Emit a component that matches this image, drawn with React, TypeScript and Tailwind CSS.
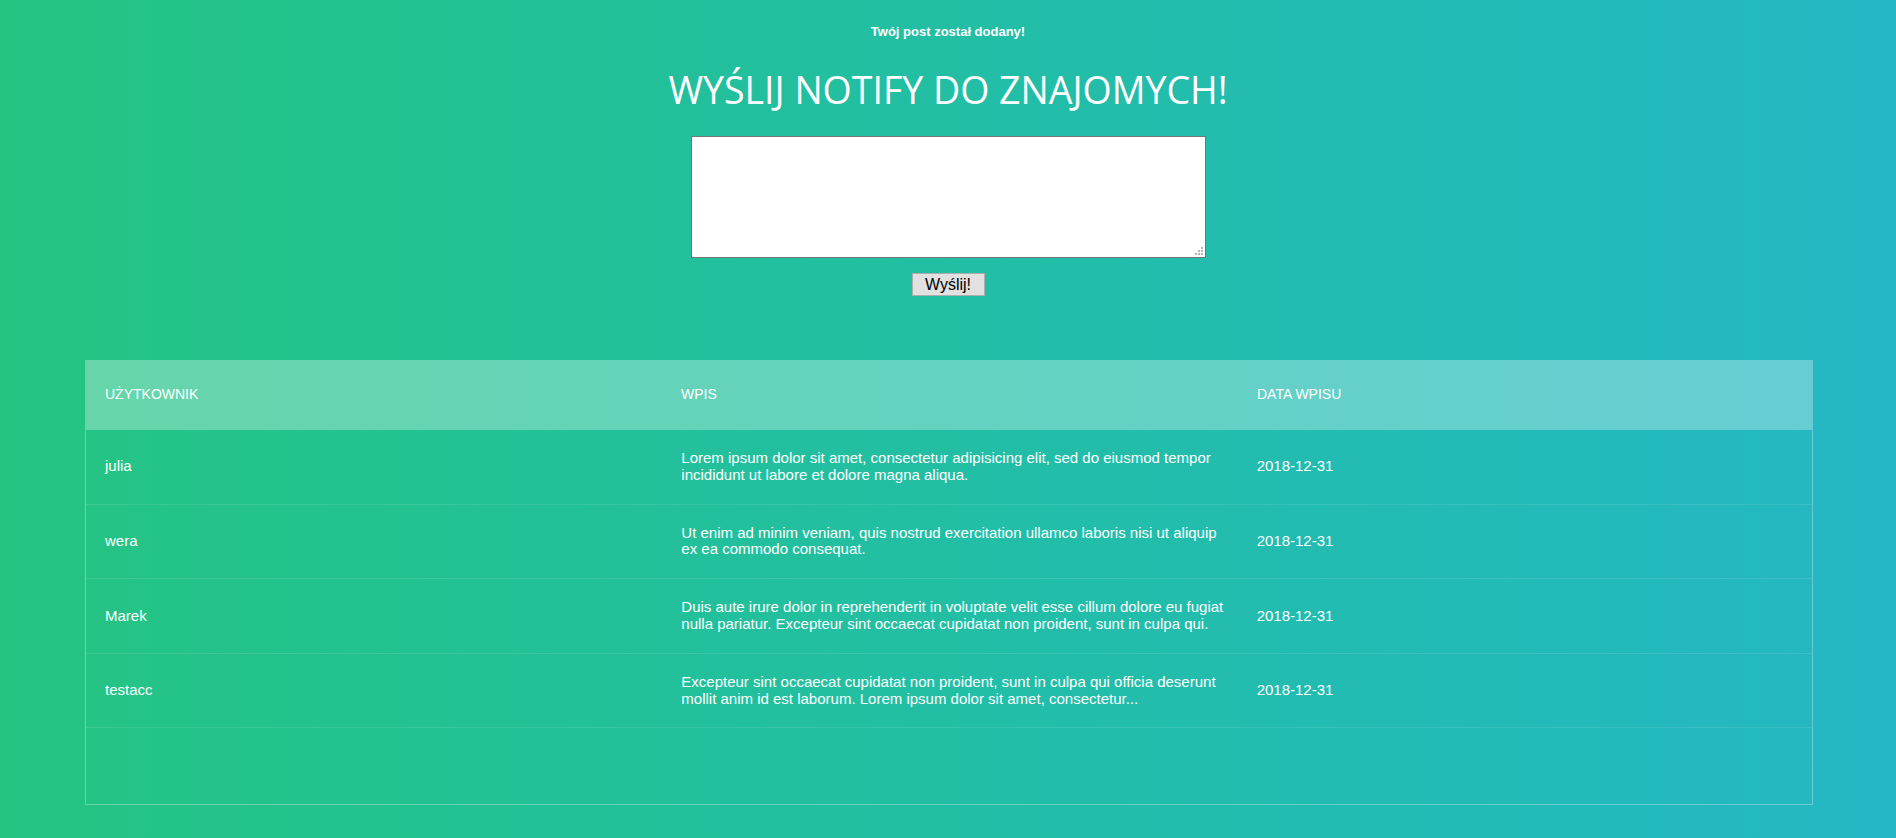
const posts = [
  {
    user: "julia",
    text: "Lorem ipsum dolor sit amet, consectetur adipisicing elit, sed do eiusmod tempor incididunt ut labore et dolore magna aliqua.",
    date: "2018-12-31",
  },
  {
    user: "wera",
    text: "Ut enim ad minim veniam, quis nostrud exercitation ullamco laboris nisi ut aliquip ex ea commodo consequat.",
    date: "2018-12-31",
  },
  {
    user: "Marek",
    text: "Duis aute irure dolor in reprehenderit in voluptate velit esse cillum dolore eu fugiat nulla pariatur. Excepteur sint occaecat cupidatat non proident, sunt in culpa qui.",
    date: "2018-12-31",
  },
  {
    user: "testacc",
    text: "Excepteur sint occaecat cupidatat non proident, sunt in culpa qui officia deserunt mollit anim id est laborum. Lorem ipsum dolor sit amet, consectetur...",
    date: "2018-12-31",
  },
];

const ResizeGrip = () => (
  <svg
    width="8"
    height="8"
    viewBox="0 0 8 8"
    className="pointer-events-none absolute bottom-[3px] right-[3px]"
  >
    <rect x="6" y="0" width="2" height="2" fill="#b5b5b5" />
    <rect x="3" y="3" width="2" height="2" fill="#b5b5b5" />
    <rect x="6" y="3" width="2" height="2" fill="#b5b5b5" />
    <rect x="0" y="6" width="2" height="2" fill="#b5b5b5" />
    <rect x="3" y="6" width="2" height="2" fill="#b5b5b5" />
    <rect x="6" y="6" width="2" height="2" fill="#b5b5b5" />
  </svg>
);

const App = () => {
  return (
    <div className="min-h-screen bg-linear-to-r from-[#25c481] to-[#25b7c4] pt-[24px] font-['Liberation_Sans',Arial,sans-serif] text-white">
      <p className="text-center text-[13px] font-bold leading-[15px]">
        Twój post został dodany!
      </p>

      <h1 className="mt-[25px] text-center font-['Open_Sans',sans-serif] text-[37.5px] font-normal uppercase leading-[52px]">
        Wyślij notify do znajomych!
      </h1>

      <form className="mt-[20px] flex flex-col items-center">
        <div className="relative">
          <textarea className="block h-[122px] w-[515px] resize-none border border-[#767676] bg-white p-[2px] text-[13px] text-black outline-none" />
          <ResizeGrip />
        </div>
        <button
          type="button"
          className="mt-[15px] h-[23px] w-[73px] border border-[#adadad] bg-[#e1e1e1] font-['Liberation_Sans',Arial,sans-serif] text-[16px] leading-none text-black"
        >
          Wyślij!
        </button>
      </form>

      <section className="ml-[85px] mr-[83px] mt-[64px]">
        <div className="grid h-[69px] grid-cols-3 items-center bg-white/30 text-[14px] uppercase">
          <div className="px-[20px]">Użytkownik</div>
          <div className="px-[20px]">Wpis</div>
          <div className="px-[20px]">Data wpisu</div>
        </div>
        <div className="h-[376px] overflow-y-auto border border-white/30">
          {posts.map((post) => (
            <div
              key={post.user}
              className="grid grid-cols-3 items-center border-b border-white/10 text-[15px] leading-[16.8px]"
            >
              <div className="px-[19px] py-[20px]">{post.user}</div>
              <div className="py-[20px] pl-[20px] pr-[8px]">{post.text}</div>
              <div className="px-[20px] py-[20px]">{post.date}</div>
            </div>
          ))}
        </div>
      </section>
    </div>
  );
};

export default App;
